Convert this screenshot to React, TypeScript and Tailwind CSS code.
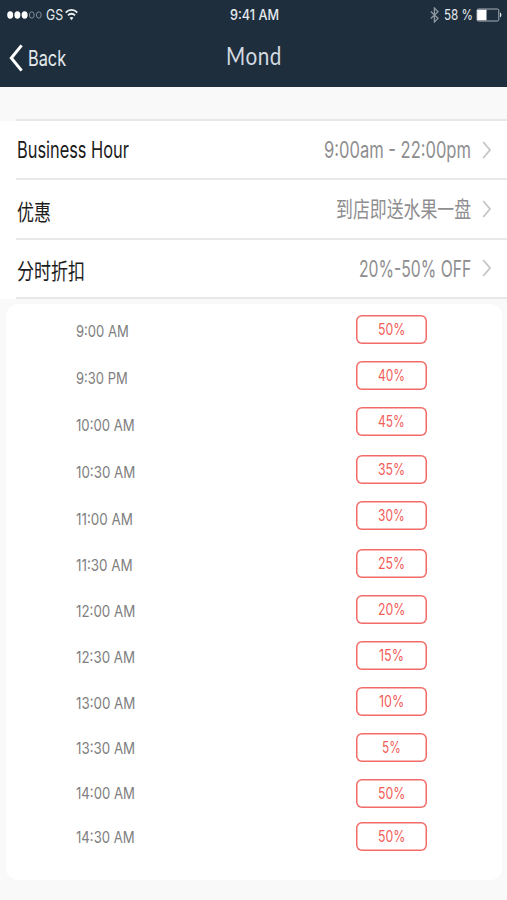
import React, { useLayoutEffect, useRef, useState } from 'react';

interface NarrowTextProps {
  width: number;
  className?: string;
  children: string;
}

// Squeezes a single line of text horizontally to the given width
const NarrowText: React.FC<NarrowTextProps> = ({ width, className = '', children }) => {
  const ref = useRef<HTMLSpanElement>(null);
  const [scale, setScale] = useState(0.8);

  useLayoutEffect(() => {
    if (ref.current && ref.current.offsetWidth > 0) {
      setScale(width / ref.current.offsetWidth);
    }
  }, [width, children]);

  return (
    <span className={`flex shrink-0 ${className}`} style={{ width }}>
      <span ref={ref} className="block shrink-0 origin-left whitespace-nowrap" style={{ transform: `scaleX(${scale})` }}>
        {children}
      </span>
    </span>
  );
};

interface Setting {
  label: string;
  labelWidth: number;
  value: string;
  valueWidth: number;
  labelClass: string;
  valueClass: string;
}

const settings: Setting[] = [
  { label: 'Business Hour', labelWidth: 112, value: '9:00am - 22:00pm', valueWidth: 147, labelClass: 'text-[22.5px] pt-px', valueClass: 'text-[22.5px] pt-px' },
  { label: '优惠', labelWidth: 34, value: '到店即送水果一盘', valueWidth: 135, labelClass: 'text-[22px] pt-1.5', valueClass: 'text-[22px]' },
  { label: '分时折扣', labelWidth: 68, value: '20%-50% OFF', valueWidth: 112, labelClass: 'text-[22px] pt-1.5', valueClass: 'text-[22.5px] pt-px' },
];

// gap values are the space above each entry
const times = [
  { text: '9:00 AM', width: 53, gap: 17 },
  { text: '9:30 PM', width: 52, gap: 27 },
  { text: '10:00 AM', width: 59, gap: 27 },
  { text: '10:30 AM', width: 59, gap: 27 },
  { text: '11:00 AM', width: 57, gap: 27 },
  { text: '11:30 AM', width: 57, gap: 26 },
  { text: '12:00 AM', width: 59, gap: 26 },
  { text: '12:30 AM', width: 59, gap: 26 },
  { text: '13:00 AM', width: 59, gap: 26 },
  { text: '13:30 AM', width: 59, gap: 25 },
  { text: '14:00 AM', width: 59, gap: 25 },
  { text: '14:30 AM', width: 59, gap: 24 },
];

const discounts = [
  { text: '50%', width: 27, gap: 11 },
  { text: '40%', width: 27, gap: 17 },
  { text: '45%', width: 27, gap: 17 },
  { text: '35%', width: 27, gap: 19 },
  { text: '30%', width: 27, gap: 17 },
  { text: '25%', width: 27, gap: 19 },
  { text: '20%', width: 27, gap: 17 },
  { text: '15%', width: 25, gap: 17 },
  { text: '10%', width: 25, gap: 17 },
  { text: '5%', width: 19, gap: 17 },
  { text: '50%', width: 27, gap: 17 },
  { text: '50%', width: 27, gap: 14 },
];

const StatusBar = () => (
  <div className="grid h-[29px] grid-cols-[1fr_auto_1fr] items-center pl-[7px] pr-[5px] text-[14.5px] leading-none text-[#e4e9ed]">
    <div className="flex items-center">
      <svg className="h-2 w-[36px]" viewBox="0 0 36 8">
        <ellipse cx="3.2" cy="4" rx="3" ry="3.7" fill="#fff" />
        <ellipse cx="10.4" cy="4" rx="3" ry="3.7" fill="#fff" />
        <ellipse cx="17.6" cy="4" rx="3" ry="3.7" fill="#fff" />
        <ellipse cx="24.8" cy="4" rx="2.4" ry="3.2" fill="none" stroke="#8a949d" strokeWidth="0.9" />
        <ellipse cx="31.8" cy="4" rx="2.4" ry="3.2" fill="none" stroke="#8a949d" strokeWidth="0.9" />
      </svg>
      <NarrowText width={17} className="ml-[3px] pt-px">GS</NarrowText>
      <svg className="ml-[2px] h-[13px] w-[13px]" viewBox="0 0 13 13" fill="none" stroke="#eef1f3" strokeWidth="1.8">
        <path d="M0.7 4.6C4 1 9 1 12.3 4.6" />
        <path d="M3 7.4c2-2.2 5-2.2 7 0" />
        <path d="M6.5 12.3 4.6 9.8c1-1 2.8-1 3.8 0z" fill="#eef1f3" stroke="none" />
      </svg>
    </div>
    <NarrowText width={49} className="pt-px font-medium">9:41 AM</NarrowText>
    <div className="flex items-center justify-end">
      <svg className="mr-[5px] h-4 w-[9px]" viewBox="0 0 9 16" fill="none" stroke="#8d979f" strokeWidth="1.3">
        <path d="M0.8 4.6 8 11.3 4.4 15V1L8 4.7 0.8 11.4" />
      </svg>
      <NarrowText width={29} className="mr-px pt-px">58 %</NarrowText>
      <svg className="ml-0.5 h-[14px] w-[26px]" viewBox="0 0 26 14">
        <rect x="1" y="1" width="21.8" height="12" rx="1.4" fill="none" stroke="#a9b1b8" />
        <rect x="1.2" y="1.7" width="9.3" height="10.6" rx="0.6" fill="#fff" />
        <path d="M24 4.6c1.8.6 1.8 4.2 0 4.8z" fill="#e4e9ed" />
      </svg>
    </div>
  </div>
);

const NavBar = () => (
  <div className="grid h-[58px] grid-cols-[1fr_auto_1fr] items-start pl-[9px] pr-[9px]">
    <button className="flex items-center pt-[14px] text-[21.5px] leading-[28px] text-[#e4e9ed]">
      <svg className="mr-[5px] h-[28px] w-[14px]" viewBox="0 0 14 28" fill="none" stroke="#fff" strokeWidth="3">
        <path d="M12.6 1.4 2.3 14l10.3 12.6" />
      </svg>
      <NarrowText width={38} className="pt-px">Back</NarrowText>
    </button>
    <h1 className="pt-[12px] font-['Lato','Open_Sans',sans-serif] text-[25.5px] leading-[28px] tracking-wide text-[#d3dae0]">
      <NarrowText width={56}>Mond</NarrowText>
    </h1>
  </div>
);

const App: React.FC = () => {
  return (
    <div className="flex h-[900px] w-[507px] flex-col overflow-hidden bg-[#f9f9f9] font-['Inter','Noto_Sans_CJK_SC',sans-serif]">
      <header className="h-[87px] shrink-0 bg-[#1f2e3d]">
        <StatusBar />
        <NavBar />
      </header>

      {/* Settings */}
      <section className="mt-8 shrink-0">
        <div className="ml-4 h-[2px] bg-[#e8e8e8]" />
        {settings.map(s => (
          <div key={s.label} className="bg-white pl-4">
            <div className="flex h-[57.4px] items-center pl-px pr-[15px] leading-[30px]">
              <NarrowText width={s.labelWidth} className={`text-[#1c1c1c] ${s.labelClass}`}>{s.label}</NarrowText>
              <NarrowText width={s.valueWidth} className={`ml-auto text-[#8e8e90] ${s.valueClass}`}>{s.value}</NarrowText>
              <svg className="ml-[11px] h-[18px] w-[10px]" viewBox="0 0 10 18" fill="none" stroke="#c5c5c9" strokeWidth="1.8">
                <path d="M1.2 1 8 9l-6.8 8" />
              </svg>
            </div>
            <div className="h-[2px] bg-[#e8e8e8]" />
          </div>
        ))}
      </section>

      {/* Discount by time */}
      <section className="ml-[6px] mt-[5px] flex h-[576px] w-[496px] shrink-0 rounded-xl bg-white pl-[70px]">
        <div className="w-[280px]">
          {times.map(t => (
            <div key={t.text} style={{ marginTop: t.gap }} className="flow-root h-5 text-[16.5px] leading-5 text-[#808080]">
              <NarrowText width={t.width}>{t.text}</NarrowText>
            </div>
          ))}
        </div>
        <div className="w-[71px]">
          {discounts.map((d, i) => (
            <div
              key={i}
              style={{ marginTop: d.gap }}
              className="flex h-[29px] items-center justify-center rounded-md pt-px text-[15.5px] leading-5 text-[#f25c57] shadow-[inset_0_0_0_1.5px_#f26b66]"
            >
              <NarrowText width={d.width}>{d.text}</NarrowText>
            </div>
          ))}
        </div>
      </section>
    </div>
  );
};

export default App;
